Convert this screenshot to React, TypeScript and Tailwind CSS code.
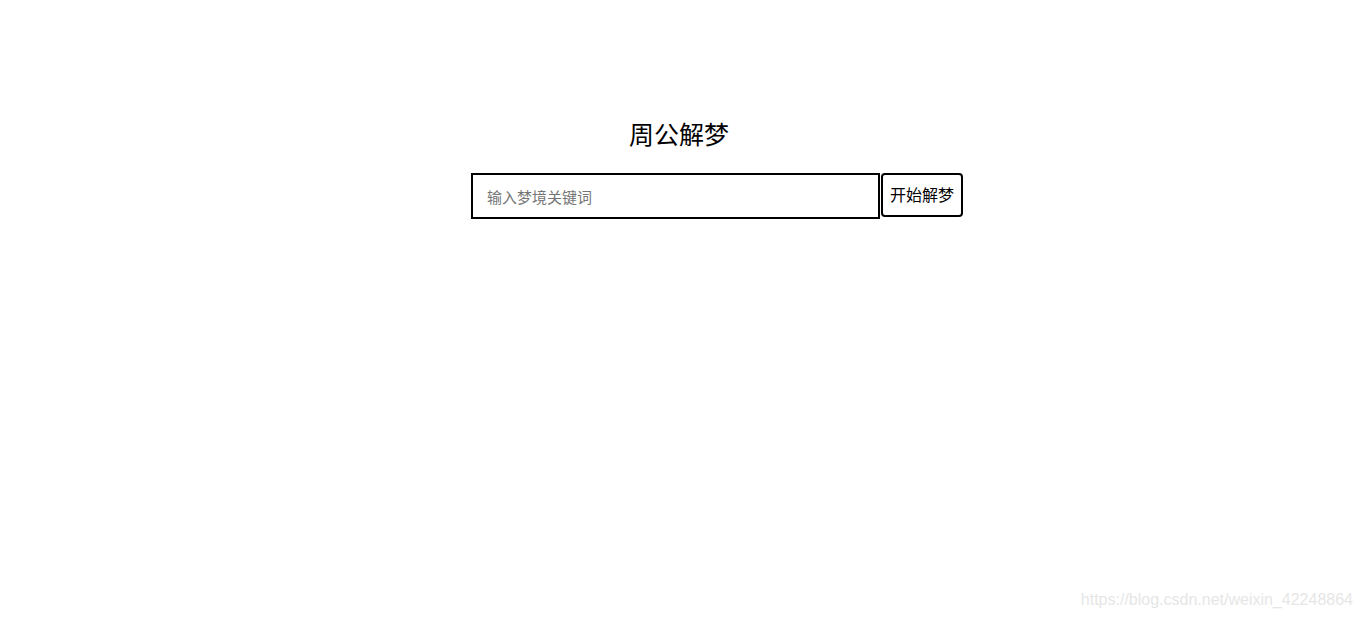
export default function App() {
  return (
    <div className="relative h-[619px] w-full bg-white font-['Liberation_Sans','Noto_Sans_CJK_SC',sans-serif] text-black">
      <div className="flex flex-col items-center pt-[119px]">
        <h1 className="pr-[4px] text-[25px] leading-[32px] font-normal">周公解梦</h1>
        <div className="mt-[22px] flex w-full justify-center pl-[72px]">
          <div className="flex items-start gap-[1px]">
            <input
              type="text"
              placeholder="输入梦境关键词"
              className="h-[46px] w-[409px] border-2 border-black px-[14px] pt-[2px] text-[15px] outline-none placeholder:text-[#757575]"
            />
            <button className="h-[44px] w-[82px] rounded-[4px] border-2 border-black bg-white pt-[2px] text-[16px]">
              开始解梦
            </button>
          </div>
        </div>
      </div>
      <div className="absolute right-[9px] bottom-[9px] text-[16px] leading-[20px] text-[#e6e6e6]">
        https://blog.csdn.net/weixin_42248864
      </div>
    </div>
  );
}
